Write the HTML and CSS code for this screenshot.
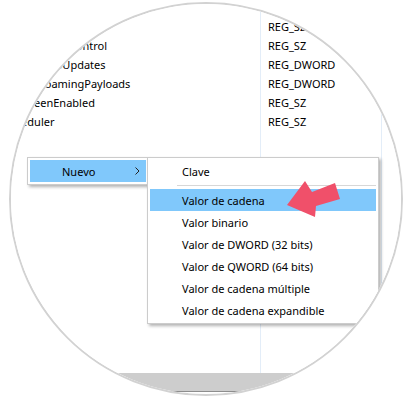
FILE: index.html
```html
<!DOCTYPE html>
<html lang="es">
<head>
    <meta charset="UTF-8">
    <meta name="viewport" content="width=device-width, initial-scale=1.0">
    <title>Editor del Registro - Nuevo valor</title>
    <link rel="stylesheet" href="styles.css">
</head>
<body>
    <div class="lens">
        <div class="screen">
            <div class="values">
                <div class="col col-name">
                    <div class="cell">(Predeterminado)</div>
                    <div class="cell">UserAccountControl</div>
                    <div class="cell">EnableAutoUpdates</div>
                    <div class="cell">EnableRoamingPayloads</div>
                    <div class="cell">OnScreenEnabled</div>
                    <div class="cell">Scheduler</div>
                </div>
                <div class="col col-type">
                    <div class="cell">REG_SZ</div>
                    <div class="cell">REG_SZ</div>
                    <div class="cell">REG_DWORD</div>
                    <div class="cell">REG_DWORD</div>
                    <div class="cell">REG_SZ</div>
                    <div class="cell">REG_SZ</div>
                </div>
                <div class="col col-data"></div>
            </div>
            <div class="scrollbar"><div class="grip"></div></div>

            <div class="menu menu-main">
                <div class="menu-item active">
                    <span>Nuevo</span>
                    <svg class="chevron" width="5" height="8" viewBox="0 0 5 8">
                        <polyline points="0.5,0.5 4,4 0.5,7.5" fill="none" stroke="#222" stroke-width="1"/>
                    </svg>
                </div>
            </div>

            <div class="menu menu-sub">
                <div class="menu-item">Clave</div>
                <div class="separator"></div>
                <div class="menu-item active">Valor de cadena</div>
                <div class="menu-item">Valor binario</div>
                <div class="menu-item">Valor de DWORD (32 bits)</div>
                <div class="menu-item">Valor de QWORD (64 bits)</div>
                <div class="menu-item">Valor de cadena múltiple</div>
                <div class="menu-item">Valor de cadena expandible</div>
            </div>

            <svg class="pointer" width="410" height="399" viewBox="0 0 410 399">
                <polygon points="287,205 305,181 312,192 335,183 340,199 316,206 315,217" fill="#f0506a"/>
            </svg>
        </div>
    </div>
</body>
</html>
```

FILE: styles.css
```css
body {
    margin: 0;
    background-color: #fff;
    font-family: "Segoe UI", "Noto Sans", sans-serif;
    font-size: 11px;
    color: #000;
}

/* round magnifier crop */
.lens {
    width: 394px;
    height: 394px;
    margin: 2px 0 0 9px;
    box-sizing: border-box;
    border: 2px solid #d2d2d2;
    border-radius: 50%;
    overflow: hidden;
}

.screen {
    position: relative;
    width: 410px;
    height: 399px;
    margin: -4px 0 0 -11px;
    display: flex;
    flex-direction: column;
    background: #fff;
}

.values {
    flex: 1;
    display: flex;
}

.col {
    padding-top: 17px;
}

.col-name {
    width: 257px;
    padding-left: 3px;
    border-right: 1px solid #e3edf8;
}

.col-type {
    width: 113px;
    padding-left: 7px;
    border-right: 1px solid #e3edf8;
}

.col-data {
    flex: 1;
}

.cell {
    height: 19px;
    line-height: 19px;
    white-space: nowrap;
}

.scrollbar {
    height: 26px;
    box-sizing: border-box;
    background: #cdcdcd;
    padding: 18px 0 0 163px;
}

.grip {
    width: 85px;
    height: 8px;
    background: #fff;
    border-top: 1px solid #8e8e8e;
}

/* context menus */
.menu {
    position: absolute;
    top: 157px;
    background: #fff;
    border: 1px solid #cccccc;
    padding: 2px;
    box-shadow: 2px 2px 3px rgba(0, 0, 0, 0.3);
}

.menu-main {
    left: 27px;
    width: 116px;
}

.menu-sub {
    left: 147px;
    width: 226px;
}

.menu-item {
    display: flex;
    align-items: center;
    height: 22px;
    padding-left: 32px;
    white-space: nowrap;
}

.menu-item.active {
    background: #80c8fb;
}

.chevron {
    margin-left: auto;
    margin-right: 6px;
}

.separator {
    height: 1px;
    margin: 3px 0 3px 27px;
    background: #d7d7d7;
}

.pointer {
    position: absolute;
    left: 0;
    top: 0;
    pointer-events: none;
}
```
